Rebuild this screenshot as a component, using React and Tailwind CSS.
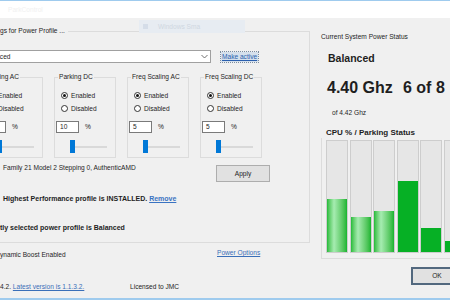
import React from "react";

function Radio({ checked, label }) {
  return (
    <div className="flex h-[13px] items-center ml-[6px]">
      <div className="flex h-[7px] w-[7px] items-center justify-center rounded-full border border-[#333] bg-white">
        {checked && <div className="h-[3px] w-[3px] rounded-full bg-[#111]" />}
      </div>
      <span className="ml-[3px]">{label}</span>
    </div>
  );
}

function Group({ title, value }) {
  return (
    <fieldset className="m-0 w-[62px] shrink-0 border border-[#dcdcdc] p-0 pb-[4px]">
      <legend className="ml-[3px] px-[1px] leading-[10px] whitespace-nowrap">{title}</legend>
      <div className="pt-[7px]">
        <Radio checked label="Enabled" />
        <Radio label="Disabled" />
        <div className="mt-[6px] ml-[1px] flex items-center">
          <div className="flex h-[12px] w-[23px] items-center border border-[#7a7a7a] bg-white pl-[3px]">{value}</div>
          <span className="ml-[6px]">%</span>
        </div>
        <div className="mt-[7px] ml-[15px] flex items-center">
          <div className="h-[13px] w-[5px] bg-[#0078d7]" />
          <div className="h-[2px] w-[32px] bg-[#d9d9d9]" />
        </div>
      </div>
    </fieldset>
  );
}

function Bar({ fill, shine }) {
  return (
    <div className="flex h-[113px] w-[22px] shrink-0 flex-col justify-end border border-[#cdcdcd] bg-[#e6e6e6]">
      <div
        className={
          shine
            ? "w-full bg-linear-to-r from-[#1dbb38] via-[#a6ecb1] via-35% to-[#10b52e]"
            : "w-full bg-[#06b025]"
        }
        style={{ height: fill + "px" }}
      />
    </div>
  );
}

export default function App() {
  return (
    <div className="relative flex h-[300px] w-[450px] flex-col overflow-hidden bg-[#f0f0f0] font-['Liberation_Sans',Arial,sans-serif] text-[6.6px] leading-[10px] text-[#1e1e1e]">
      <div className="h-[1px] bg-[#9fcbee]" />
      <div className="flex h-[17px] items-center bg-white pl-[8px] text-[#f1f1f1]">ParkControl</div>

      <div className="absolute left-[139px] top-[20px] z-10 flex h-[13px] w-[106px] items-center bg-[#e7ecf2] pl-[4px] text-[#cfd7e1]">
        <div className="h-[5px] w-[5px] bg-[#d5dde8]" />
        <span className="ml-[10px]">Windows Sma</span>
      </div>

      <div className="flex h-[280px]">
        {/* left column */}
        <div className="flex w-[310px] shrink-0 flex-col">
          <div className="mt-[13px] w-[310px] border-t border-r border-b border-[#dcdcdc] pb-[9px]">
            <div className="-mt-[6px] flex h-[10px] items-center">
              <span className="bg-[#f0f0f0] pr-[3px]">gs for Power Profile ...</span>
            </div>

            <div className="mt-[14px] flex items-center">
              <div className="-ml-[19px] flex h-[13px] w-[230px] shrink-0 items-center border border-[#a0a0a0] bg-white pl-[1px]">
                <span className="flex-1">Balanced</span>
                <svg width="7" height="5" viewBox="0 0 7 5" className="mr-[2px]">
                  <path d="M0.5 1 L3.5 4 L6.5 1" fill="none" stroke="#606060" strokeWidth="0.9" />
                </svg>
              </div>
              <span className="ml-[10px] bg-[#d5e0ec] px-[1px] text-[#2a5fae] underline outline-1 outline-dotted outline-[#7a8ca0]">Make active</span>
            </div>

            <div className="mt-[9px] -ml-[19px] flex gap-[11px]">
              <Group title="Parking AC" value="" />
              <Group title="Parking DC" value="10" />
              <Group title="Freq Scaling AC" value="5" />
              <Group title="Freq Scaling DC" value="5" />
            </div>

            <div className="mt-[5px] flex items-start">
              <span className="w-[216px] pl-[3px]">Family 21 Model 2 Stepping 0, AuthenticAMD</span>
              <div className="mt-[2px] flex h-[17px] w-[54px] items-center justify-center border border-[#adadad] bg-[#e1e1e1]">Apply</div>
            </div>

            <div className="mt-[12px] pl-[3px] text-[7px] font-bold">
              Highest Performance profile is INSTALLED. <span className="text-[#3a73c2] underline">Remove</span>
            </div>
            <div className="mt-[19px] text-[7px] font-bold">tly selected power profile is Balanced</div>
          </div>

          <div className="mt-[7px] flex items-start">
            <span className="w-[217px]">ynamic Boost Enabled</span>
            <span className="-mt-[2px] text-[#3a6fb8] underline">Power Options</span>
          </div>

          <div className="mt-[22px] flex">
            <span className="w-[130px]">
              4.2. <span className="text-[#3a6fb8] underline">Latest version is 1.1.3.2.</span>
            </span>
            <span>Licensed to JMC</span>
          </div>
        </div>

        {/* right column */}
        <div className="flex flex-1 flex-col pl-[11px]">
          <div className="mt-[14px]">Current System Power Status</div>
          <div className="mt-[9px] ml-[7px] text-[10.5px] leading-[14px] font-bold">Balanced</div>
          <div className="mt-[13px] ml-[6px] flex text-[16px] leading-[20px] font-bold whitespace-nowrap">
            <span className="w-[76px]">4.40 Ghz</span>
            <span>6 of 8</span>
          </div>
          <div className="mt-[10px] ml-[11px]">of 4.42 Ghz</div>
          <div className="mt-[10px] ml-[5px] text-[8px] font-bold">CPU % / Parking Status</div>
          <div className="flex w-[140px] gap-[1.5px] border-b border-l border-[#dcdcdc] pt-[2px] pb-[5px] pl-[4px]">
            <Bar fill={53} shine />
            <Bar fill={35} shine />
            <Bar fill={41} shine />
            <Bar fill={71} />
            <Bar fill={24} />
            <Bar fill={11} />
          </div>
          <div className="mt-[8px] ml-[90px] flex h-[18px] w-[60px] shrink-0 items-center justify-center border-2 border-[#52687e] bg-[#e1e1e1] pr-[8px]">OK</div>
        </div>
      </div>

      <div className="h-[2px] bg-[#9fcbee]" />
    </div>
  );
}
